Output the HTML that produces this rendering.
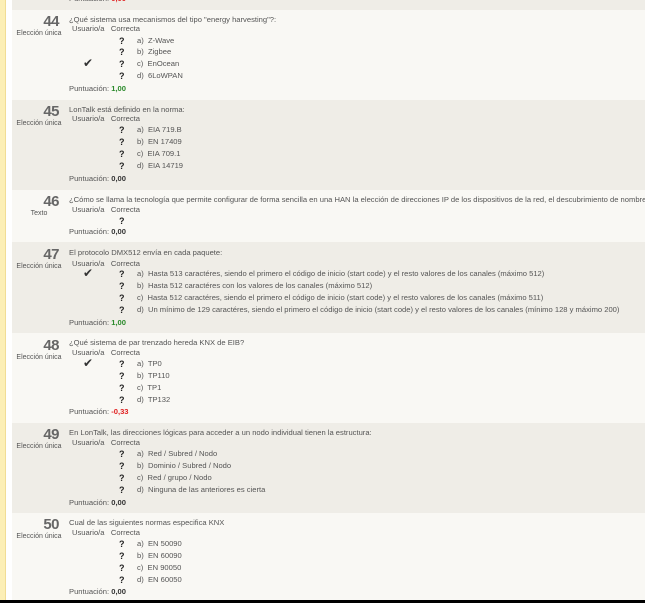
<!DOCTYPE html>
<html><head><meta charset="utf-8"><style>
*{margin:0;padding:0;box-sizing:border-box}
body{width:645px;height:603px;overflow:hidden;background:#fff;position:relative;font-family:"Liberation Sans",Arial,sans-serif;font-size:7.6px;color:#555}
.strip{position:absolute;left:0;top:0;width:6px;height:603px;background:#fcefb6;border-right:1px solid #f1dd95}
.blk{position:absolute;left:12px;width:633px}
.d{background:#efede7}.l{background:#f9f8f4}
.t{position:absolute;white-space:nowrap;line-height:10px}
.num{position:absolute;width:47px;text-align:right;left:0;font:bold 15px "Liberation Sans Narrow","Liberation Sans",sans-serif;color:#666;line-height:14px;letter-spacing:-0.5px}
.typ{position:absolute;width:60px;left:-3px;text-align:center;font-size:7px;color:#555;line-height:9px}
.q{font-weight:bold;color:#222;font-size:9px}
.ck{font-size:12px;color:#333}
.g{color:#2a8a2a;font-weight:bold}.r{color:#e02020;font-weight:bold}.k{color:#333;font-weight:bold}
.bot{position:absolute;left:0;top:600px;width:645px;height:3px;background:#000}
</style></head><body>
<div class="strip"></div>
<div class="blk d" style="top:0;height:10px"><div class="t" style="left:57px;top:-6px">Puntuación: <span class="r">0,00</span></div></div>

<div class="blk l" style="top:10px;height:90px">
<div class="num" style="top:5px">44</div><div class="typ" style="top:19px">Elección única</div>
<div class="t" style="left:57px;top:5px">¿Qué sistema usa mecanismos del tipo "energy harvesting"?:</div>
<div class="t" style="left:60px;top:14px">Usuario/a &nbsp;&nbsp;Correcta</div>
<div class="t q" style="left:107px;top:26px">?</div><div class="t" style="left:125px;top:26px">a)&nbsp; Z-Wave</div>
<div class="t q" style="left:107px;top:37px">?</div><div class="t" style="left:125px;top:37px">b)&nbsp; Zigbee</div>
<div class="t ck" style="left:71px;top:48px">✔</div><div class="t q" style="left:107px;top:49px">?</div><div class="t" style="left:125px;top:49px">c)&nbsp; EnOcean</div>
<div class="t q" style="left:107px;top:61px">?</div><div class="t" style="left:125px;top:61px">d)&nbsp; 6LoWPAN</div>
<div class="t" style="left:57px;top:74px">Puntuación: <span class="g">1,00</span></div>
</div>

<div class="blk d" style="top:100px;height:90px">
<div class="num" style="top:5px">45</div><div class="typ" style="top:19px">Elección única</div>
<div class="t" style="left:57px;top:5px">LonTalk está definido en la norma:</div>
<div class="t" style="left:60px;top:14px">Usuario/a &nbsp;&nbsp;Correcta</div>
<div class="t q" style="left:107px;top:25px">?</div><div class="t" style="left:125px;top:25px">a)&nbsp; EIA 719.B</div>
<div class="t q" style="left:107px;top:37px">?</div><div class="t" style="left:125px;top:37px">b)&nbsp; EN 17409</div>
<div class="t q" style="left:107px;top:49px">?</div><div class="t" style="left:125px;top:49px">c)&nbsp; EIA 709.1</div>
<div class="t q" style="left:107px;top:61px">?</div><div class="t" style="left:125px;top:61px">d)&nbsp; EIA 14719</div>
<div class="t" style="left:57px;top:74px">Puntuación: <span class="k">0,00</span></div>
</div>

<div class="blk l" style="top:190px;height:52px">
<div class="num" style="top:5px">46</div><div class="typ" style="top:19px">Texto</div>
<div class="t" style="left:57px;top:5px">¿Cómo se llama la tecnología que permite configurar de forma sencilla en una HAN la elección de direcciones IP de los dispositivos de la red, el descubrimiento de nombres</div>
<div class="t" style="left:60px;top:15px">Usuario/a &nbsp;&nbsp;Correcta</div>
<div class="t q" style="left:107px;top:26px">?</div>
<div class="t" style="left:57px;top:37px">Puntuación: <span class="k">0,00</span></div>
</div>

<div class="blk d" style="top:242px;height:91px">
<div class="num" style="top:6px">47</div><div class="typ" style="top:20px">Elección única</div>
<div class="t" style="left:57px;top:6px">El protocolo DMX512 envía en cada paquete:</div>
<div class="t" style="left:60px;top:17px">Usuario/a &nbsp;&nbsp;Correcta</div>
<div class="t ck" style="left:71px;top:26px">✔</div><div class="t q" style="left:107px;top:27px">?</div><div class="t" style="left:125px;top:27px">a)&nbsp; Hasta 513 caractéres, siendo el primero el código de inicio (start code) y el resto valores de los canales (máximo 512)</div>
<div class="t q" style="left:107px;top:39px">?</div><div class="t" style="left:125px;top:39px">b)&nbsp; Hasta 512 caractéres con los valores de los canales (máximo 512)</div>
<div class="t q" style="left:107px;top:51px">?</div><div class="t" style="left:125px;top:51px">c)&nbsp; Hasta 512 caractéres, siendo el primero el código de inicio (start code) y el resto valores de los canales (máximo 511)</div>
<div class="t q" style="left:107px;top:63px">?</div><div class="t" style="left:125px;top:63px">d)&nbsp; Un mínimo de 129 caractéres, siendo el primero el código de inicio (start code) y el resto valores de los canales (mínimo 128 y máximo 200)</div>
<div class="t" style="left:57px;top:76px">Puntuación: <span class="g">1,00</span></div>
</div>

<div class="blk l" style="top:333px;height:90px">
<div class="num" style="top:6px">48</div><div class="typ" style="top:20px">Elección única</div>
<div class="t" style="left:57px;top:5px">¿Qué sistema de par trenzado hereda KNX de EIB?</div>
<div class="t" style="left:60px;top:15px">Usuario/a &nbsp;&nbsp;Correcta</div>
<div class="t ck" style="left:71px;top:25px">✔</div><div class="t q" style="left:107px;top:26px">?</div><div class="t" style="left:125px;top:26px">a)&nbsp; TP0</div>
<div class="t q" style="left:107px;top:38px">?</div><div class="t" style="left:125px;top:38px">b)&nbsp; TP110</div>
<div class="t q" style="left:107px;top:50px">?</div><div class="t" style="left:125px;top:50px">c)&nbsp; TP1</div>
<div class="t q" style="left:107px;top:62px">?</div><div class="t" style="left:125px;top:62px">d)&nbsp; TP132</div>
<div class="t" style="left:57px;top:74px">Puntuación: <span class="r">-0,33</span></div>
</div>

<div class="blk d" style="top:423px;height:90px">
<div class="num" style="top:5px">49</div><div class="typ" style="top:19px">Elección única</div>
<div class="t" style="left:57px;top:5px">En LonTalk, las direcciones lógicas para acceder a un nodo individual tienen la estructura:</div>
<div class="t" style="left:60px;top:15px">Usuario/a &nbsp;&nbsp;Correcta</div>
<div class="t q" style="left:107px;top:26px">?</div><div class="t" style="left:125px;top:26px">a)&nbsp; Red / Subred / Nodo</div>
<div class="t q" style="left:107px;top:38px">?</div><div class="t" style="left:125px;top:38px">b)&nbsp; Dominio / Subred / Nodo</div>
<div class="t q" style="left:107px;top:50px">?</div><div class="t" style="left:125px;top:50px">c)&nbsp; Red / grupo / Nodo</div>
<div class="t q" style="left:107px;top:62px">?</div><div class="t" style="left:125px;top:62px">d)&nbsp; Ninguna de las anteriores es cierta</div>
<div class="t" style="left:57px;top:75px">Puntuación: <span class="k">0,00</span></div>
</div>

<div class="blk l" style="top:513px;height:87px">
<div class="num" style="top:5px">50</div><div class="typ" style="top:19px">Elección única</div>
<div class="t" style="left:57px;top:5px">Cual de las siguientes normas especifica KNX</div>
<div class="t" style="left:60px;top:15px">Usuario/a &nbsp;&nbsp;Correcta</div>
<div class="t q" style="left:107px;top:26px">?</div><div class="t" style="left:125px;top:26px">a)&nbsp; EN 50090</div>
<div class="t q" style="left:107px;top:38px">?</div><div class="t" style="left:125px;top:38px">b)&nbsp; EN 60090</div>
<div class="t q" style="left:107px;top:50px">?</div><div class="t" style="left:125px;top:50px">c)&nbsp; EN 90050</div>
<div class="t q" style="left:107px;top:62px">?</div><div class="t" style="left:125px;top:62px">d)&nbsp; EN 60050</div>
<div class="t" style="left:57px;top:74px">Puntuación: <span class="k">0,00</span></div>
</div>
<div class="bot"></div>
</body></html>
